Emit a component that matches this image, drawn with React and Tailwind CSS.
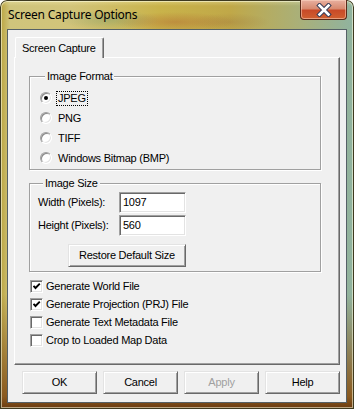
import React from "react";

const F = "font-['Liberation_Sans',Arial,sans-serif] text-[11px] leading-[13px] text-black tracking-[-0.25px]";

function Radio({ checked, label, focus }) {
  return (
    <div className="flex h-[20px] items-center">
      <span className="relative flex h-[12px] w-[12px] shrink-0 items-center justify-center rounded-full border border-t-[#a0a0a0] border-l-[#a0a0a0] border-r-white border-b-white bg-white shadow-[inset_1px_1px_0_#8a8a8a,inset_-1px_-1px_0_#e3e3e3]">
        {checked && <span className="h-[4px] w-[4px] rounded-full bg-black" />}
      </span>
      <span className={"ml-[4px] px-[1px] border border-dotted " + (focus ? "border-black" : "border-transparent")}>{label}</span>
    </div>
  );
}

function Check({ checked, label }) {
  return (
    <div className="flex h-[18px] items-center">
      <span className="flex h-[13px] w-[13px] shrink-0 items-center justify-center border border-t-[#a0a0a0] border-l-[#a0a0a0] border-r-white border-b-white bg-white shadow-[inset_1px_1px_0_#696969,inset_-1px_-1px_0_#e3e3e3]">
        {checked && (
          <svg width="9" height="9" viewBox="0 0 9 9">
            <path d="M1.5 3.8 L3.5 6 L7.8 1.6" fill="none" stroke="#000" strokeWidth="1.9" />
          </svg>
        )}
      </span>
      <span className="ml-[3px]">{label}</span>
    </div>
  );
}

function Btn({ children, w = "w-[75px]", disabled }) {
  return (
    <div className={w + " h-[23px] flex items-center justify-center border border-t-[#e3e3e3] border-l-[#e3e3e3] border-r-[#696969] border-b-[#696969] bg-[#f0f0f0] shadow-[inset_1px_1px_0_#fff,inset_-1px_-1px_0_#a0a0a0] " + (disabled ? "text-[#a0a0a0]" : "")}>
      {children}
    </div>
  );
}

function Field({ value }) {
  return (
    <div className="h-[21px] w-[67px] border border-t-[#a0a0a0] border-l-[#a0a0a0] border-r-white border-b-white bg-white pl-[3px] pt-[3px] shadow-[inset_1px_1px_0_#696969,inset_-1px_-1px_0_#e3e3e3]">
      {value}
    </div>
  );
}

export default function App() {
  return (
    <div className="relative h-[409px] w-[354px] overflow-hidden rounded-t-[7px] bg-[radial-gradient(ellipse_60px_10px_at_175px_22px,rgba(170,80,40,0.35),rgba(0,0,0,0)),radial-gradient(ellipse_50px_10px_at_110px_20px,rgba(90,140,110,0.3),rgba(0,0,0,0)),radial-gradient(ellipse_40px_9px_at_230px_22px,rgba(150,110,60,0.3),rgba(0,0,0,0)),linear-gradient(180deg,rgba(255,250,200,0.35)_0px,rgba(0,0,0,0)_6px,rgba(0,0,0,0)_72%,#8a5a20_97%,#6a3a10_100%),linear-gradient(90deg,#b9a23c_0px,#cfc47c_10px,#d2c47a_20%,#c9b34a_45%,#c0a848_65%,#a9b07a_85%,#8fb3a0_100%)] shadow-[inset_0_0_0_1px_#3e3a20,inset_0_0_0_2px_rgba(255,255,230,0.55)]">
      <div className="flex h-[29px] items-start pl-[8px] pr-[7px]">
        <div className="mt-[7px] font-['Noto_Sans',sans-serif] text-[12px] leading-[16px] tracking-[-0.2px] text-black">Screen Capture Options</div>
        <div className="flex-1" />
        <div className="flex h-[20px] w-[47px] items-center justify-center rounded-b-[4px] border border-t-0 border-[#5a2a1a] bg-[linear-gradient(180deg,#e8b0a0_0%,#d88a70_45%,#c84a28_55%,#d06030_100%)] shadow-[inset_0_0_0_1px_rgba(255,220,200,0.5)]">
          <svg width="16" height="14" viewBox="0 0 16 14">
            <path d="M3.5 2.5 L12.5 11.5 M12.5 2.5 L3.5 11.5" stroke="#3a3e58" strokeWidth="4.6" strokeLinecap="square" />
            <path d="M3.5 2.5 L12.5 11.5 M12.5 2.5 L3.5 11.5" stroke="#ffffff" strokeWidth="2.6" strokeLinecap="square" />
          </svg>
        </div>
      </div>
      <div className={"ml-[7px] h-[374px] w-[340px] border border-[#556066] bg-[#f0f0f0] " + F}>
        <div className="relative z-10 -mb-[1px] ml-[7px] mt-[7px] h-[21px] w-[89px] rounded-t-[2px] border-l border-t border-r border-l-white border-t-white border-r-[#696969] bg-[#f0f0f0] pl-[6px] pt-[4px] shadow-[inset_-1px_0_0_#a0a0a0]">
          Screen Capture
        </div>
        <div className="ml-[6px] h-[308px] w-[326px] border border-t-white border-l-white border-r-[#696969] border-b-[#696969] shadow-[inset_-1px_-1px_0_#a0a0a0]">
          <fieldset className="ml-[14px] mt-[12px] w-[292px] border border-[#a0a0a0] pb-[1px] pl-[10px] pt-[5px] shadow-[inset_1px_1px_0_#fff,1px_1px_0_#fff]">
            <legend className="ml-[5px] bg-[#f0f0f0] px-[2px]">Image Format</legend>
            <Radio checked focus label="JPEG" />
            <Radio label="PNG" />
            <Radio label="TIFF" />
            <Radio label="Windows Bitmap (BMP)" />
          </fieldset>
          <fieldset className="ml-[14px] mt-[7px] w-[292px] border border-[#a0a0a0] pb-[4px] pl-[8px] pt-[2px] shadow-[inset_1px_1px_0_#fff,1px_1px_0_#fff]">
            <legend className="ml-[5px] bg-[#f0f0f0] px-[2px]">Image Size</legend>
            <div className="flex items-center">
              <span className="w-[81px]">Width (Pixels):</span>
              <Field value="1097" />
            </div>
            <div className="mt-[2px] flex items-center">
              <span className="w-[81px]">Height (Pixels):</span>
              <Field value="560" />
            </div>
            <div className="ml-[30px] mt-[8px]">
              <Btn w="w-[118px]">Restore Default Size</Btn>
            </div>
          </fieldset>
          <div className="ml-[15px] mt-[5px]">
            <Check checked label="Generate World File" />
            <Check checked label="Generate Projection (PRJ) File" />
            <Check label="Generate Text Metadata File" />
            <Check label="Crop to Loaded Map Data" />
          </div>
        </div>
        <div className="ml-[14px] mt-[6px] flex gap-[6px]">
          <Btn>OK</Btn>
          <Btn>Cancel</Btn>
          <Btn disabled>Apply</Btn>
          <Btn>Help</Btn>
        </div>
      </div>
    </div>
  );
}
